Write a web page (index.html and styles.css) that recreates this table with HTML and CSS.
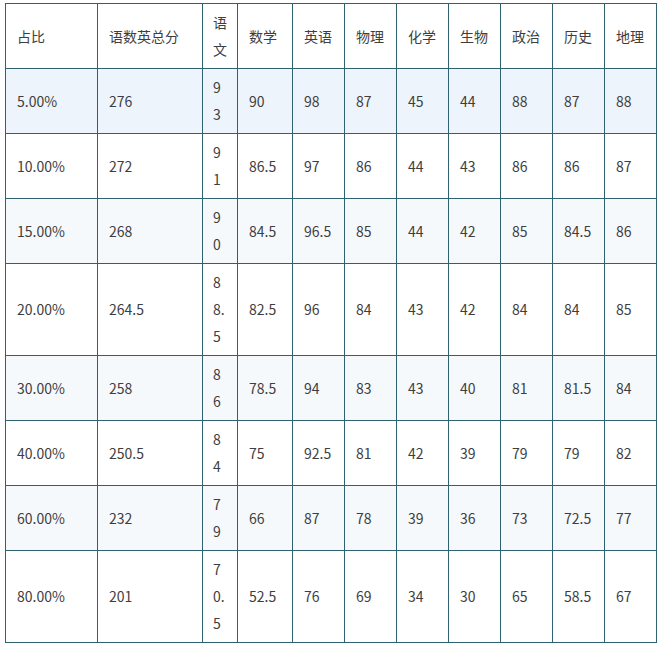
FILE: index.html
```html
<!DOCTYPE html>
<html lang="zh-CN">
<head>
<meta charset="utf-8">
<link rel="stylesheet" href="styles.css">
</head>
<body>
<div class="wrap">
<table class="score">
<colgroup>
<col class="c1"><col class="c2"><col class="c3"><col class="c4"><col class="c5">
<col class="c6"><col class="c6"><col class="c6"><col class="c6"><col class="c6"><col class="c6">
</colgroup>
<thead>
<tr><td>占比</td><td>语数英总分</td><td>语文</td><td>数学</td><td>英语</td><td>物理</td><td>化学</td><td>生物</td><td>政治</td><td>历史</td><td>地理</td></tr>
</thead>
<tbody>
<tr class="first"><td>5.00%</td><td>276</td><td>93</td><td>90</td><td>98</td><td>87</td><td>45</td><td>44</td><td>88</td><td>87</td><td>88</td></tr>
<tr><td>10.00%</td><td>272</td><td>91</td><td>86.5</td><td>97</td><td>86</td><td>44</td><td>43</td><td>86</td><td>86</td><td>87</td></tr>
<tr class="alt"><td>15.00%</td><td>268</td><td>90</td><td>84.5</td><td>96.5</td><td>85</td><td>44</td><td>42</td><td>85</td><td>84.5</td><td>86</td></tr>
<tr><td>20.00%</td><td>264.5</td><td>88.5</td><td>82.5</td><td>96</td><td>84</td><td>43</td><td>42</td><td>84</td><td>84</td><td>85</td></tr>
<tr class="alt"><td>30.00%</td><td>258</td><td>86</td><td>78.5</td><td>94</td><td>83</td><td>43</td><td>40</td><td>81</td><td>81.5</td><td>84</td></tr>
<tr><td>40.00%</td><td>250.5</td><td>84</td><td>75</td><td>92.5</td><td>81</td><td>42</td><td>39</td><td>79</td><td>79</td><td>82</td></tr>
<tr class="alt"><td>60.00%</td><td>232</td><td>79</td><td>66</td><td>87</td><td>78</td><td>39</td><td>36</td><td>73</td><td>72.5</td><td>77</td></tr>
<tr><td>80.00%</td><td>201</td><td>70.5</td><td>52.5</td><td>76</td><td>69</td><td>34</td><td>30</td><td>65</td><td>58.5</td><td>67</td></tr>
</tbody>
</table>
</div>
</body>
</html>
```
FILE: styles.css
```css
html, body {
  margin: 0;
  padding: 0;
  background: #ffffff;
}
.wrap {
  padding: 3px 0 0 5px;
}
.score {
  border-collapse: collapse;
  table-layout: fixed;
  width: 652px;
  font-family: "Noto Sans CJK SC", "Noto Sans", sans-serif;
  font-size: 14px;
  color: #3e3e3e;
}
.c1 { width: 92px; }
.c2 { width: 105px; }
.c3 { width: 35px; }
.c4 { width: 55px; }
.c5 { width: 52px; }
.c6 { width: 52px; }
.score td {
  border: 1px solid #2f6270;
  padding: 5px 10px 5px 11px;
  line-height: 27px;
  vertical-align: middle;
  word-break: break-all;
  text-align: left;
}
.score td:nth-child(3) {
  padding-left: 10px;
  padding-right: 10px;
}
.score tr.first td { background: #eef4fb; }
.score tr.alt td { background: #f6f9fc; }
```
